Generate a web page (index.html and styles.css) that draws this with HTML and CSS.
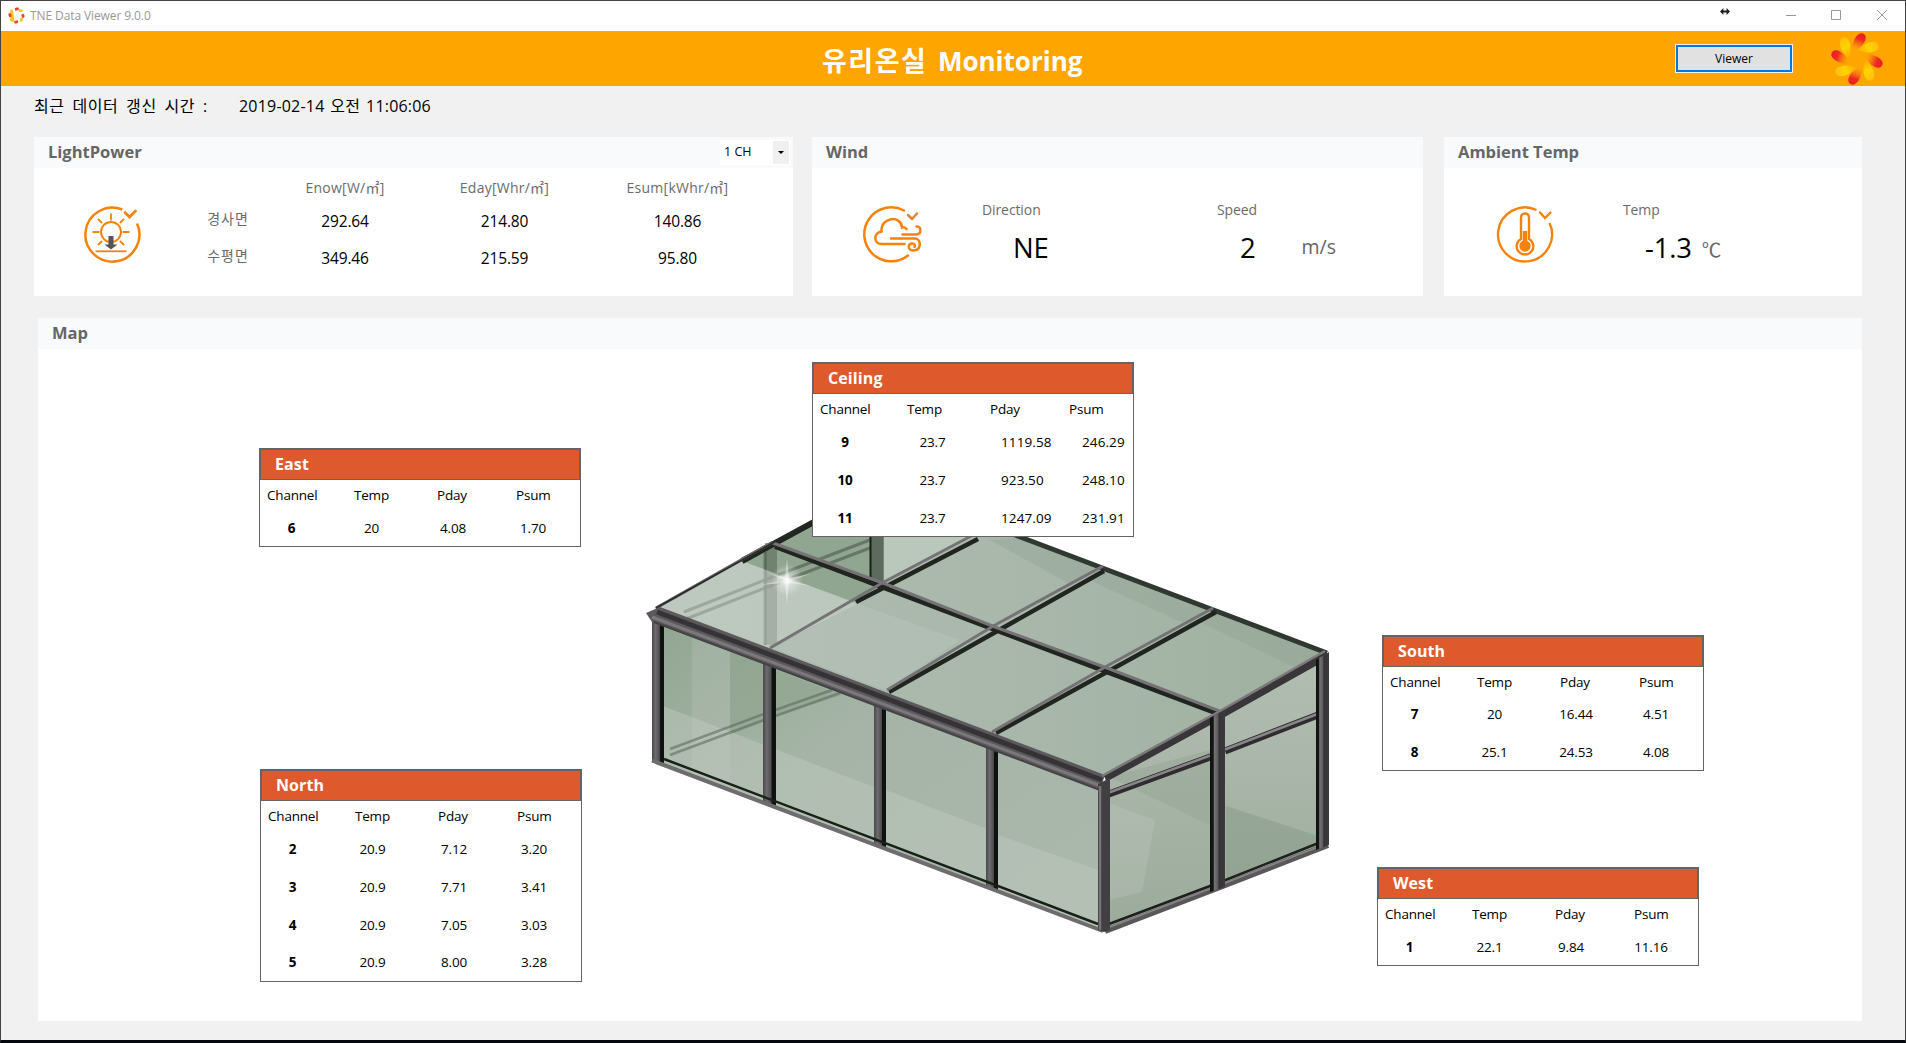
FILE: index.html
```html
<!DOCTYPE html>
<html lang="ko">
<head>
<meta charset="utf-8">
<title>TNE Data Viewer 9.0.0</title>
<link rel="stylesheet" href="styles.css">
</head>
<body>
<svg width="0" height="0" class="defs">
  <defs>
    <linearGradient id="red" x1=".6" y1="0" x2=".3" y2="1"><stop offset="0" stop-color="#ee1c25"/><stop offset=".3" stop-color="#ee2a25"/><stop offset=".75" stop-color="#fb8a10" stop-opacity=".6"/><stop offset="1" stop-color="#ffa500" stop-opacity="0"/></linearGradient>
    <linearGradient id="yel" x1=".6" y1="0" x2=".3" y2="1"><stop offset="0" stop-color="#ffc010"/><stop offset=".5" stop-color="#ffd400"/><stop offset="1" stop-color="#ffc800" stop-opacity=".3"/></linearGradient>
    <g id="petals">
      <g id="pair"><path d="M3-25.500C8-26.500 10-22 8-18C5-12 1-9-6-7C-5-13-3-23 3-25.500Z" fill="url(#red)"/>
      <path d="M3-25C8-26 10-22 8-18C5-12 1-9-6-7C-5-13-3-23 3-25Z" fill="url(#yel)" transform="rotate(42)"/></g>
      <use href="#pair" transform="rotate(90)"/><use href="#pair" transform="rotate(180)"/><use href="#pair" transform="rotate(270)"/>
    </g>
  </defs>
</svg>
<div class="window">
  <header class="titlebar">
    <svg class="app-icon" viewBox="-8.5 -8.5 17 17" fill="none" stroke-width="3.2" stroke-linecap="round">
      <g stroke="#f9c31f" stroke-width="2.800"><path d="M3.400-5L5-4.600M5 3.400L4.600 5M-3.400 5L-5-4.600M-5 4.600L-5 3"/></g>
      <g stroke="#e8452b" stroke-width="2.800"><path d="M-.4-6.300L1-6.700M6.300-.4L6.700 1M.4 6.300L-1 6.700M-6.300.4L-6.700-1"/></g>
    </svg>
    <span class="app-name">TNE Data Viewer 9.0.0</span>
    <svg class="cursor" viewBox="0 0 10 7"><path d="M0 3.500L3.400 0V2.500H6.600V0L10 3.500L6.600 7V4.500H3.400V7Z" fill="#222"/></svg>
    <svg class="controls" viewBox="0 0 102 12" fill="none" stroke="#999"><path d="M0 6.500H10M45.500 1.500H54.500V10.500H45.500ZM91 1L101 11M101 1L91 11"/></svg>
  </header>
  <div class="banner">
    <h1>유리온실 <span>Monitoring</span></h1>
    <button class="viewer">Viewer</button>
    <svg class="logo" viewBox="-26 -26 52 52"><use href="#petals"/></svg>
  </div>
  <main>
    <div class="updated"><span class="k">최근 데이터 갱신 시간 :</span><span class="v">2019-02-14 오전 11:06:06</span></div>
    <div class="cards">
      <section class="card">
        <div class="card-head"><h2>LightPower</h2><div class="combo"><span>1 CH</span><i></i></div></div>
        <div class="light">
          <svg class="icon" viewBox="0 0 60 60" fill="none" stroke="#f5820b" stroke-width="2">
            <path d="M41.300 4.500A27 27 0 1 0 56 18.500" stroke-width="2.500"/><path d="M44 7.500L48.500 12L54.500 6" stroke-width="2.800" stroke-linecap="round"/>
            <circle cx="30" cy="27" r="10" stroke-width="1.900"/>
            <path d="M30 8.500V15.500M17 14L21 18M43 14L39 18M11.500 27H18.500M41.500 27H48.500M17 40L21 36M43 40L39 36" stroke-width="1.800"/>
            <path d="M14.500 46.300H45.500" stroke-width="1.800"/><path d="M27.500 31H32.500V39.500H36.500L30 44.500L23.500 39.500H27.500Z" fill="#555" stroke="none"/>
          </svg>
          <span></span><b class="th">Enow[W/㎡]</b><b class="th">Eday[Whr/㎡]</b><b class="th">Esum[kWhr/㎡]</b>
          <span class="rowname">경사면</span><span>292.64</span><span>214.80</span><span>140.86</span>
          <span class="rowname">수평면</span><span>349.46</span><span>215.59</span><span>95.80</span>
        </div>
      </section>
      <section class="card">
        <div class="card-head"><h2>Wind</h2></div>
        <div class="gauges wind">
          <svg class="icon" viewBox="0 0 60 60" fill="none" stroke="#f5820b" stroke-width="2.500" stroke-linecap="round">
            <path d="M41 5.500A27 27 0 1 0 45 50.500"/><path d="M45 10L49 14L54 8.500" stroke="#d98736"/>
            <path d="M41.500 39H18.500C10.500 39 10 28 18.500 26.500C17.500 12 38 9.500 39 22.500C41 22 42.500 23 43.500 24"/>
            <path d="M39.500 29.500H53C59 29 58.500 21 53.500 21.500M28 33.500H52C58 33.500 59 44.500 51 45.500C44 46 44.500 38 49.500 38.500C52 39 52.500 41 51.500 42"/>
          </svg>
          <div class="dir"><label>Direction</label><p>NE</p></div>
          <div class="spd"><label>Speed</label><p>2 <em>m/s</em></p></div>
        </div>
      </section>
      <section class="card">
        <div class="card-head"><h2>Ambient Temp</h2></div>
        <div class="gauges">
          <svg class="icon" viewBox="0 0 60 60" fill="none" stroke="#f5820b" stroke-width="2.400">
            <path d="M41.500 5A27 27 0 1 0 54.500 18"/><path d="M45 7.500L50 13L55.500 7.500" stroke-linecap="round"/>
            <path d="M26 34V13Q26 8.500 30 8.500Q34 8.500 34 13V34A8.300 8.300 0 1 1 26 34Z"/>
            <circle cx="30" cy="41" r="5.700" fill="#f5820b" stroke="none"/><path d="M30 41V26" stroke-width="4.500"/>
          </svg>
          <div class="tmp"><label>Temp</label><p>-1.3 <em>℃</em></p></div>
        </div>
      </section>
    </div>
    <section class="card map">
      <div class="card-head"><h2>Map</h2></div>
      <div class="canvas">
        <svg class="house" viewBox="640 480 700 460">
          <defs>
            <linearGradient id="wall" x1="0" y1="0" x2="1" y2="1"><stop offset="0" stop-color="#92a692"/><stop offset=".4" stop-color="#a5b4a6"/><stop offset="1" stop-color="#abb9ac"/></linearGradient>
            <linearGradient id="roof" x1="0" y1="0" x2="1" y2="0"><stop offset="0" stop-color="#b0bdb2"/><stop offset=".5" stop-color="#a9b8ab"/><stop offset="1" stop-color="#9fb0a0"/></linearGradient>
            <linearGradient id="side" x1="0" y1="0" x2="0" y2="1"><stop offset="0" stop-color="#b3beb3"/><stop offset="1" stop-color="#9bab9b"/></linearGradient>
            <linearGradient id="post" x1="0" y1="0" x2="1" y2="0"><stop offset="0" stop-color="#4a484a"/><stop offset=".3" stop-color="#6e6b6e"/><stop offset=".62" stop-color="#4f4d50"/><stop offset=".7" stop-color="#0e120e"/><stop offset="1" stop-color="#101410"/></linearGradient>
            <linearGradient id="dpost" x1="0" y1="0" x2="1" y2="0"><stop offset="0" stop-color="#0e120e"/><stop offset=".22" stop-color="#151815"/><stop offset=".28" stop-color="#777377"/><stop offset=".5" stop-color="#605d60"/><stop offset=".6" stop-color="#363436"/><stop offset="1" stop-color="#3c3a3c"/></linearGradient>
            <radialGradient id="glow"><stop offset="0" stop-color="#fff"/><stop offset=".4" stop-color="#fff" stop-opacity=".4"/><stop offset="1" stop-color="#fff" stop-opacity="0"/></radialGradient>
          </defs>
          <path fill="url(#roof)" d="M654 608L773 543L884 483L1327 653L1105 777Z"/>
          <path fill="#90a690" d="M742 561L773 543L884 483L884 583L870 592L857 603Z"/>
          <path fill="#b9c8bb" d="M884 535H977L884 583Z"/>
          <path fill="#92a393" opacity=".4" d="M990 540L1023 537L1100 567L1070 584ZM1085 578L1103 568L1212 611L1188 625ZM1196 620L1215 610L1325 653L1296 668Z"/>
          <path fill="url(#wall)" d="M655 620L1100 788V931L655 764Z"/>
          <path fill="url(#side)" d="M1105 777L1327 653V847L1109 931Z"/>
          <path fill="#8da38d" opacity=".6" d="M730 652L764 664V722L730 735ZM775 670L842 695L775 716Z"/>
          <path fill="#bdc7be" opacity=".5" d="M663 706L874 787V845L663 764ZM886 790L990 830V885L886 845ZM998 835L1098 870V928L998 890Z"/>
          <path fill="#c2ccc2" opacity=".25" d="M692 635L730 650V788L692 774Z"/>
          <path fill="#879a88" opacity=".5" d="M1226 806L1318 836V847L1226 880Z"/>
          <path fill="#8b9d8c" opacity=".3" d="M1109 777L1210 825V750Z"/>
          <path fill="#c0cac1" opacity=".3" d="M1109 803L1155 820L1142 892L1109 900Z"/>
          <g fill="none" stroke="#5d6a5e">
            <path d="M771 543V645" stroke-width="12" opacity=".6"/><path d="M765 552V645" stroke="#3c483c" stroke-width="3" opacity=".5"/>
            <path d="M686 619L765 588L875 546M684 612L765 580L875 538" stroke-width="3" opacity=".8"/>
            <path d="M670 755L764 720L840 693M670 749L764 714L832 690" stroke-width="2.500" opacity=".6"/>
            <path d="M877 484V585" stroke-width="13"/><path d="M870.500 500V585" stroke="#181e18" stroke-width="2"/>
          </g>
          <path fill="#ccd4cc" opacity=".5" d="M660 607L742 561L858 604L770 648Z"/>
          <path fill="#bcc5bd" opacity=".4" d="M773 648L858 604L960 640L886 690Z"/>
          <!-- roof bars: dark shadow side first, lit edge over it -->
          <g fill="none" stroke="#20251f">
            <path d="M742 561L884 484" stroke-width="6"/><path d="M884 484L1023 538L1327 653" stroke="#2f392f" stroke-width="5"/>
            <path d="M775 546.500L1220 714.500" stroke-width="5"/>
            <path d="M856 602L978 539M889 692L1104 571M996 733L1216 612" stroke-width="4.500"/>
          </g>
          <g fill="none" stroke="#767376" stroke-width="3">
            <path d="M773 543L883 583L995 627L1107 668L1222 712"/>
            <path d="M770 648L882 583L975 534M887 690L995 625L1103 566M992 732L1107 666L1213 608"/>
            <path d="M656 608L773 542" stroke="#6a676a"/>
          </g>
          <path d="M656 608L812 521" stroke="#282a28" stroke-width="1.500"/>
          <!-- front wall frame -->
          <path d="M652 620H664V766L652 762Z" fill="url(#post)"/>
          <path d="M763 664H776V807L763 802Z" fill="url(#post)"/>
          <path d="M874 706H886V849L874 845Z" fill="url(#post)"/>
          <path d="M986 748H998V891L986 887Z" fill="url(#post)"/>
          <path d="M664 759L1098 924" stroke="#182018" stroke-width="2.500" fill="none"/>
          <path d="M652 760.500L1103 931" stroke="#6f6c6f" stroke-width="4" fill="none"/>
          <!-- eave gutter -->
          <path d="M646 613L660 607L1105 775L1100 790L652 622Z" fill="#5c595c"/>
          <path d="M657 612L1102 780" stroke="#353335" stroke-width="5"/><path d="M652 617L1101 786" stroke="#7b787b" stroke-width="3"/><path d="M654 622L1100 790" stroke="#454345" stroke-width="2"/>
          <!-- right wall frame -->
          <path d="M1109 794L1213 756M1225 751L1318 715" stroke="#2e2c2e" stroke-width="7"/><path d="M1109 792.500L1213 754.500M1225 749.500L1320 713" stroke="#898689" stroke-width="2.500"/>
          <path d="M1105 778L1222 714L1327 655" stroke="#383638" stroke-width="8" fill="none"/><path d="M1102 776L1220 711L1325 651" stroke="#7d7a7d" stroke-width="2.500" fill="none"/>
          <path d="M1109 924L1218 883L1326 840" stroke="#1d201d" stroke-width="2.500" fill="none"/><path d="M1105 931L1220 887L1328 845" stroke="#5a575a" stroke-width="6" fill="none"/><path d="M1110 927L1220 885L1326 844" stroke="#888588" stroke-width="1.500" fill="none"/>
          <path d="M1210 718L1225 710V887L1210 892Z" fill="url(#dpost)"/>
          <path d="M1316 660L1329 652V845L1316 850Z" fill="url(#dpost)"/>
          <path d="M1098 784L1110 778V930L1104 932L1098 930Z" fill="#413f41"/><path d="M1100 786V930" stroke="#777477" stroke-width="2.500"/>
          <circle cx="787" cy="580" r="16" fill="url(#glow)"/><path d="M787 558L789 578L810 574L790 581L812 586L789 583L787 604L785 583L760 585L784 580L766 572L785 578Z" fill="#fff" opacity=".4"/>
        </svg>

        <article class="panel wide ceiling"><h3>Ceiling</h3>
          <div class="cols"><span>Channel</span><span>Temp</span><span>Pday</span><span>Psum</span></div>
          <div class="row"><b>9</b><span>23.7</span><span>1119.58</span><span>246.29</span></div>
          <div class="row"><b>10</b><span>23.7</span><span>923.50</span><span>248.10</span></div>
          <div class="row"><b>11</b><span>23.7</span><span>1247.09</span><span>231.91</span></div>
        </article>
        <article class="panel east"><h3>East</h3>
          <div class="cols"><span>Channel</span><span>Temp</span><span>Pday</span><span>Psum</span></div>
          <div class="row"><b>6</b><span>20</span><span>4.08</span><span>1.70</span></div>
        </article>
        <article class="panel north"><h3>North</h3>
          <div class="cols"><span>Channel</span><span>Temp</span><span>Pday</span><span>Psum</span></div>
          <div class="row"><b>2</b><span>20.9</span><span>7.12</span><span>3.20</span></div>
          <div class="row"><b>3</b><span>20.9</span><span>7.71</span><span>3.41</span></div>
          <div class="row"><b>4</b><span>20.9</span><span>7.05</span><span>3.03</span></div>
          <div class="row"><b>5</b><span>20.9</span><span>8.00</span><span>3.28</span></div>
        </article>
        <article class="panel south"><h3>South</h3>
          <div class="cols"><span>Channel</span><span>Temp</span><span>Pday</span><span>Psum</span></div>
          <div class="row"><b>7</b><span>20</span><span>16.44</span><span>4.51</span></div>
          <div class="row"><b>8</b><span>25.1</span><span>24.53</span><span>4.08</span></div>
        </article>
        <article class="panel west"><h3>West</h3>
          <div class="cols"><span>Channel</span><span>Temp</span><span>Pday</span><span>Psum</span></div>
          <div class="row"><b>1</b><span>22.1</span><span>9.84</span><span>11.16</span></div>
        </article>
      </div>
    </section>
  </main>
</div>
</body>
</html>
```

FILE: styles.css
```css
* { box-sizing: border-box; margin: 0; padding: 0; }
body { width: 1906px; height: 1043px; overflow: hidden; font-family: "Open Sans", "Noto Sans CJK KR", sans-serif; font-size: 14px; color: #000; }
.defs { position: absolute; }
svg { display: block; flex: none; }
.window { height: 1043px; display: flex; flex-direction: column; background: #f1f1f1; border: 1px solid #434343; border-bottom: 3px solid #05070f; }

.titlebar { height: 30px; background: #fff; display: flex; align-items: center; padding: 0 17px 2px 7px; }
.app-icon { width: 17px; height: 17px; }
.app-name { margin-left: 5px; font-size: 12px; letter-spacing: -.1px; color: #999; }
.cursor { width: 10px; height: 7px; margin: -7px 56px 0 auto; }
.controls { width: 102px; height: 12px; }

.banner { height: 55px; background: #ffa500; display: flex; align-items: center; padding-right: 22px; }
.banner h1 { margin-left: 821px; width: 270px; white-space: nowrap; font-size: 27px; line-height: 34px; letter-spacing: 1.500px; color: #fff; padding-top: 4px; }
.banner h1 span { font-size: 26px; letter-spacing: 0; margin-left: 2px; }
.viewer { margin-left: auto; width: 118px; height: 29px; margin-bottom: 1px; border: 1px solid #f3f3f3; background: #e1e1e1; box-shadow: inset 0 0 0 2px #0078d7; font: 12px "Open Sans", sans-serif; padding-top: 1px; }
.logo { width: 52px; height: 52px; margin-left: 38px; }

main { flex: 1; padding: 0 43px 19px 33px; display: flex; flex-direction: column; }
.updated { height: 51px; display: flex; padding-top: 7px; line-height: 26px; font-size: 16px; white-space: nowrap; }
.updated .k { width: 205px; letter-spacing: .6px; word-spacing: 3px; }
.updated .v { letter-spacing: .2px; word-spacing: 1.500px; }

.cards { display: grid; grid-template-columns: 759px 611px 418px; column-gap: 19px; height: 159px; }
.cards .card:last-child { margin-left: 2px; width: 418px; }
.card { background: #fff; }
.card-head { height: 31px; background: #f8fafc; display: flex; justify-content: space-between; align-items: center; padding: 0 3px 0 14px; }
h2 { font-size: 16.500px; line-height: 22px; margin-top: -2px; color: #666; letter-spacing: 0; }
.combo { width: 70px; height: 25px; background: #fff; display: flex; justify-content: space-between; align-items: center; padding: 0 1px 2px 4px; font-size: 12.500px; letter-spacing: 0; line-height: 20px; }
.combo i { width: 16px; height: 23px; margin-top: 1px; background: #f0f0f0; display: grid; place-items: center; }
.combo i::after { content: ""; border: 3px solid transparent; border-top-color: #000; border-bottom: 0; }

.icon { width: 60px; height: 60px; }
.light { display: grid; grid-template-columns: 156px 76px 158px 161px 185px; grid-template-rows: 29px 37px 37px; padding-top: 5px; place-items: center; font-size: 15.500px; letter-spacing: -.15px; line-height: 22px; }
.light .icon { grid-row: 1 / 4; margin: 20px 2px 0 0; }
.th { font-weight: 400; font-size: 14px; letter-spacing: .25px; color: #6b6b6b; }
.rowname { font-size: 14px; letter-spacing: .9px; color: #6b6b6b; padding-bottom: 3px; }

.gauges { display: flex; padding-top: 30px; }
.gauges .icon { margin: 7px 0 0 51px; }
.gauges label { display: block; font-size: 14px; line-height: 24px; letter-spacing: -.1px; color: #6b6b6b; }
.gauges p { font-size: 27.500px; line-height: 34px; margin-top: 9px; letter-spacing: -.2px; white-space: nowrap; }
.gauges em { display: inline-block; font-style: normal; font-size: 19.500px; line-height: 24px; letter-spacing: 0; color: #666; }
.dir { margin-left: 59px; width: 235px; }
.dir p { padding-left: 31px; }
.spd p { padding-left: 23px; }
.spd em { margin-left: 39px; transform: translateY(-4px); }
.tmp { margin-left: 68px; }
.tmp p { padding-left: 22px; }
.tmp em { margin-left: 3px; transform: translateY(-1px); }

.map { margin: 22px 0 0 4px; flex: 1; }
.canvas { position: relative; height: 672px; }
.house { position: absolute; left: 602px; top: 131px; width: 700px; height: 460px; }
.panel { position: absolute; width: 322px; border: 1px solid #646464; background: #fff; font-size: 13.500px; letter-spacing: -.2px; line-height: 20px; }
.panel h3 { height: 31px; background: #de592c; border: 1px solid #646464; padding-left: 14px; font-size: 16px; line-height: 29px; letter-spacing: .1px; color: #fff; }
.cols { display: grid; grid-template-columns: 87px 83px 79px 1fr; padding: 5px 0 0 7px; height: 29px; }
.row { display: grid; grid-template-columns: 63px 97px 66px 1fr; height: 38px; align-items: center; text-align: center; }
.wide .row { grid-template-columns: 64px 97px 1fr 62px; }
.wide .row span:nth-child(2) { padding-left: 14px; }
.wide .row span:nth-child(3) { padding-left: 27px; text-align: left; letter-spacing: .1px; }
.wide .row span:nth-child(4) { padding-left: 11px; text-align: left; letter-spacing: .1px; }
.ceiling { left: 774px; top: 13px; height: 175px; }
.east { left: 221px; top: 99px; height: 99px; }
.north { left: 222px; top: 420px; height: 213px; }
.north .row:last-child { height: 36px; }
.south { left: 1344px; top: 286px; height: 136px; }
.south .cols { height: 28px; }
.west { left: 1339px; top: 518px; height: 99px; }
```
